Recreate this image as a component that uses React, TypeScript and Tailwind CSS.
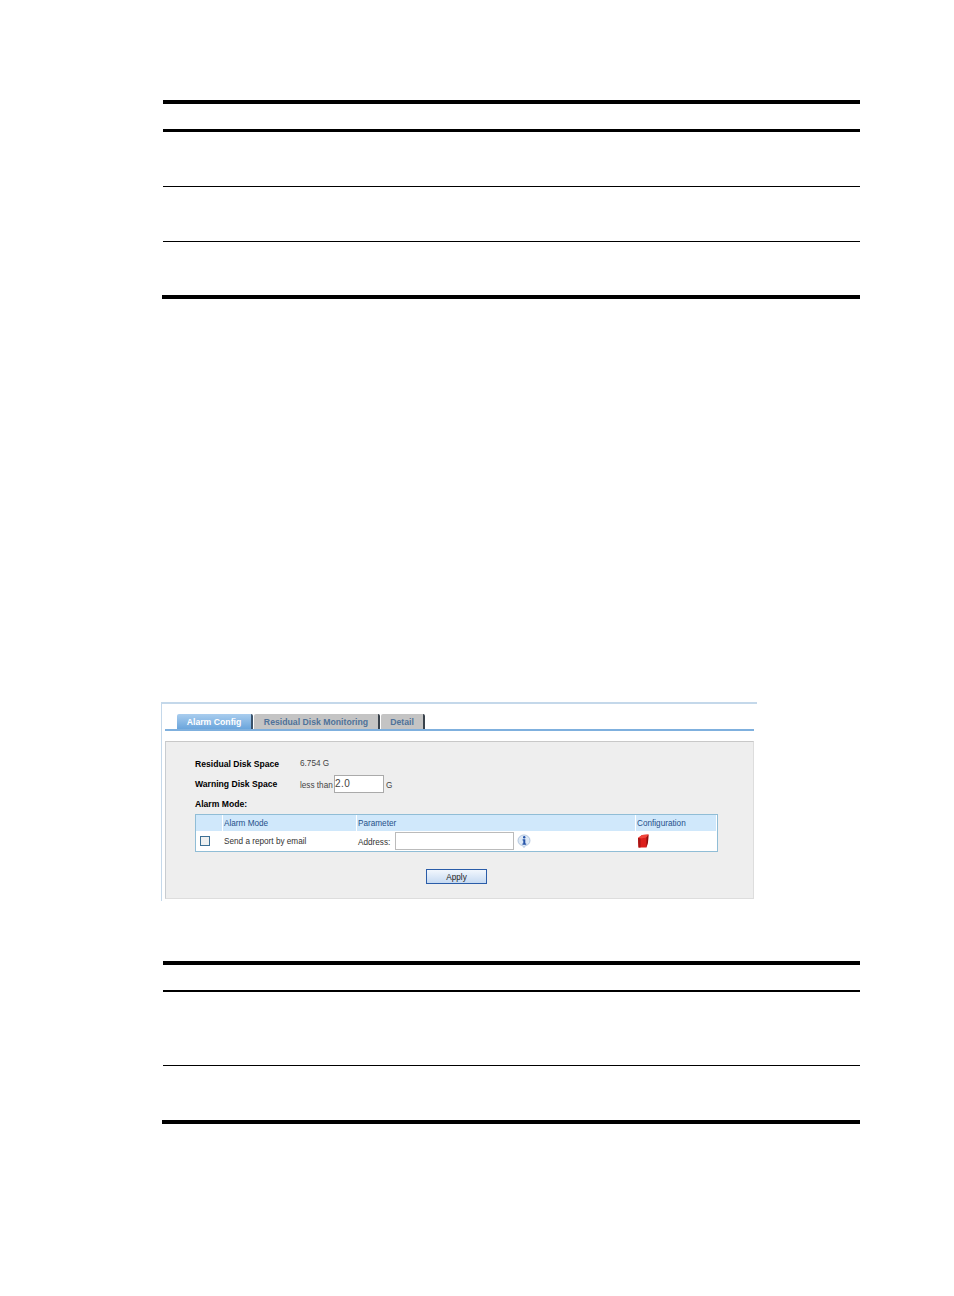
import React from "react";

// --- DATA ---
const TOP_ROWS = [54, 54, 53];
const BOTTOM_ROWS = [73, 54];

const TABS = [
  { label: "Alarm Config", width: "w-[76px]", active: true },
  { label: "Residual Disk Monitoring", width: "w-[126px]", active: false },
  { label: "Detail", width: "w-[44px]", active: false },
];

// empty doc table, only the rules show in the picture
function DocTable({ headHeight, headRule, rows }: { headHeight: string; headRule: string; rows: number[] }) {
  return (
    <div className="w-[698px]">
      <div className="ml-px h-[4px] bg-black" />
      <div className={headHeight} />
      <div className={`ml-px bg-black ${headRule}`} />
      {rows.map((h, i) => (
        <div key={i}>
          <div style={{ height: h }} />
          {i < rows.length - 1 ? <div className="ml-px h-px bg-black" /> : <div className="h-[4px] bg-black" />}
        </div>
      ))}
    </div>
  );
}

function InfoIcon() {
  return (
    <svg width="14" height="14" viewBox="0 0 14 14">
      <path d="M1 6.5 A5.8 5.4 0 0 1 13 6.5 A5.8 5.4 0 0 1 8.5 11.6 L7 13.6 L5.5 11.6 A5.8 5.4 0 0 1 1 6.5Z" fill="#dde9f6" stroke="#8fa9cc" strokeWidth="0.6" />
      <circle cx="7.2" cy="3.2" r="1.2" fill="#2553a8" />
      <path d="M5.6 5.2 H8.3 V9.6 H9.2 V10.8 H5.4 V9.6 H6.3 V6.4 H5.6Z" fill="#2553a8" />
    </svg>
  );
}

function RedBox() {
  return (
    <svg width="12" height="14" viewBox="0 0 12 14">
      <path d="M1 4 L5 1 L11.5 0.5 L11 8 L9.5 13.5 L1.5 13.5Z" fill="#dc1f1c" />
      <path d="M1 4 L5 1 L11.5 0.5 L9.5 3.6 L3.5 4.4Z" fill="#f0453c" />
      <path d="M1 4 L3.5 4.4 L3.5 13.5 L1.5 13.5Z" fill="#a81414" />
      <path d="M9.5 3.6 L11.5 0.5 L11 8 L9.5 13.5Z" fill="#8a0f0f" />
    </svg>
  );
}

function AlarmPanel() {
  return (
    <div className="mt-[403px] h-[199px] w-[596px] -ml-px border-l border-t-2 border-[#c4d8ea] font-['Liberation_Sans',Arial,sans-serif]">
      <div className="ml-[3px] w-[589px]">
        {/* tabs */}
        <div className="flex h-[27px] items-end gap-px border-b-2 border-[#7fb0de] pl-[12px]">
          {TABS.map((t) => (
            <div
              key={t.label}
              className={`flex h-[15px] items-center justify-center rounded-t-[2px] pt-[2px] text-[8.7px] font-bold ${t.width} ${
                t.active
                  ? "bg-gradient-to-b from-[#a9cdee] to-[#6aa5dc] text-white border-r-2 border-[#39526b]"
                  : "bg-[#c4c4c4] text-[#4f7299] border-r-2 border-[#39424b]"
              }`}
            >
              {t.label}
            </div>
          ))}
        </div>

        {/* panel */}
        <div className="mt-[10px] h-[158px] border border-[#dddddd] border-t-[#c8c8c8] border-l-[#c8ccd0] bg-[#eeeeee] pl-[29px] pt-[14px] text-[8.2px] text-[#222]">
          <div className="flex h-[16px] items-center">
            <span className="w-[105px] text-[8.6px] font-bold text-black">Residual Disk Space</span>
            <span className="text-[#444]">6.754 G</span>
          </div>
          <div className="mt-[3px] flex h-[18px] items-center">
            <span className="w-[105px] text-[8.6px] font-bold text-black">Warning Disk Space</span>
            <span className="mt-[4px] w-[34px] whitespace-nowrap text-[#444]">less than</span>
            <div className="flex h-[18px] w-[50px] items-center border border-[#aaaaaa] bg-white pb-px text-[10px] tracking-[0.5px] text-[#444]">2.0</div>
            <span className="ml-[2px] mt-[4px] text-[#444]">G</span>
          </div>
          <div className="mt-[6px] h-[10px] text-[8.6px] font-bold leading-[10px] text-black">Alarm Mode:</div>

          {/* alarm mode table */}
          <div className="mt-[5px] w-[523px] border border-[#90bdd6] bg-white">
            <div className="mr-px flex h-[16px] items-center bg-[#d0e8fb] text-[8.2px] text-[#25508a]">
              <div className="w-[26px]" />
              <div className="w-[134px] border-l border-white pl-px pt-px leading-[16px]">Alarm Mode</div>
              <div className="w-[279px] border-l border-white pl-px pt-px leading-[16px]">Parameter</div>
              <div className="border-l border-white pl-px pt-px leading-[16px]">Configuration</div>
            </div>
            <div className="flex h-[20px] items-center">
              <div className="ml-[4px] mr-[14px] h-[10px] w-[10px] border border-[#3c6f94] bg-[#eef0f0]" />
              <div className="w-[132px] pt-[2px] text-[#333]">Send a report by email</div>
              <div className="flex w-[279px] items-center">
                <span className="ml-[2px] mt-[5px] w-[37px] text-[#333]">Address:</span>
                <div className="h-[18px] w-[119px] border border-[#bbbbbb] bg-white" />
                <div className="ml-[3px]"><InfoIcon /></div>
              </div>
              <div className="ml-[2px]"><RedBox /></div>
            </div>
          </div>

          <div className="ml-[231px] mt-[17px] flex h-[15px] w-[61px] items-center justify-center border border-[#2a5ca8] bg-gradient-to-b from-[#f2f7fd] to-[#c6daf2] pt-[3px] text-[8.2px] text-[#222]">
            Apply
          </div>
        </div>
      </div>
    </div>
  );
}

export default function App() {
  return (
    <div className="h-[1296px] w-[954px] overflow-hidden bg-white pl-[162px] pt-[100px]">
      <DocTable headHeight="h-[25px]" headRule="h-[3px]" rows={TOP_ROWS} />
      <AlarmPanel />
      <div className="mt-[60px]">
        <DocTable headHeight="h-[25px]" headRule="h-[2px]" rows={BOTTOM_ROWS} />
      </div>
    </div>
  );
}
